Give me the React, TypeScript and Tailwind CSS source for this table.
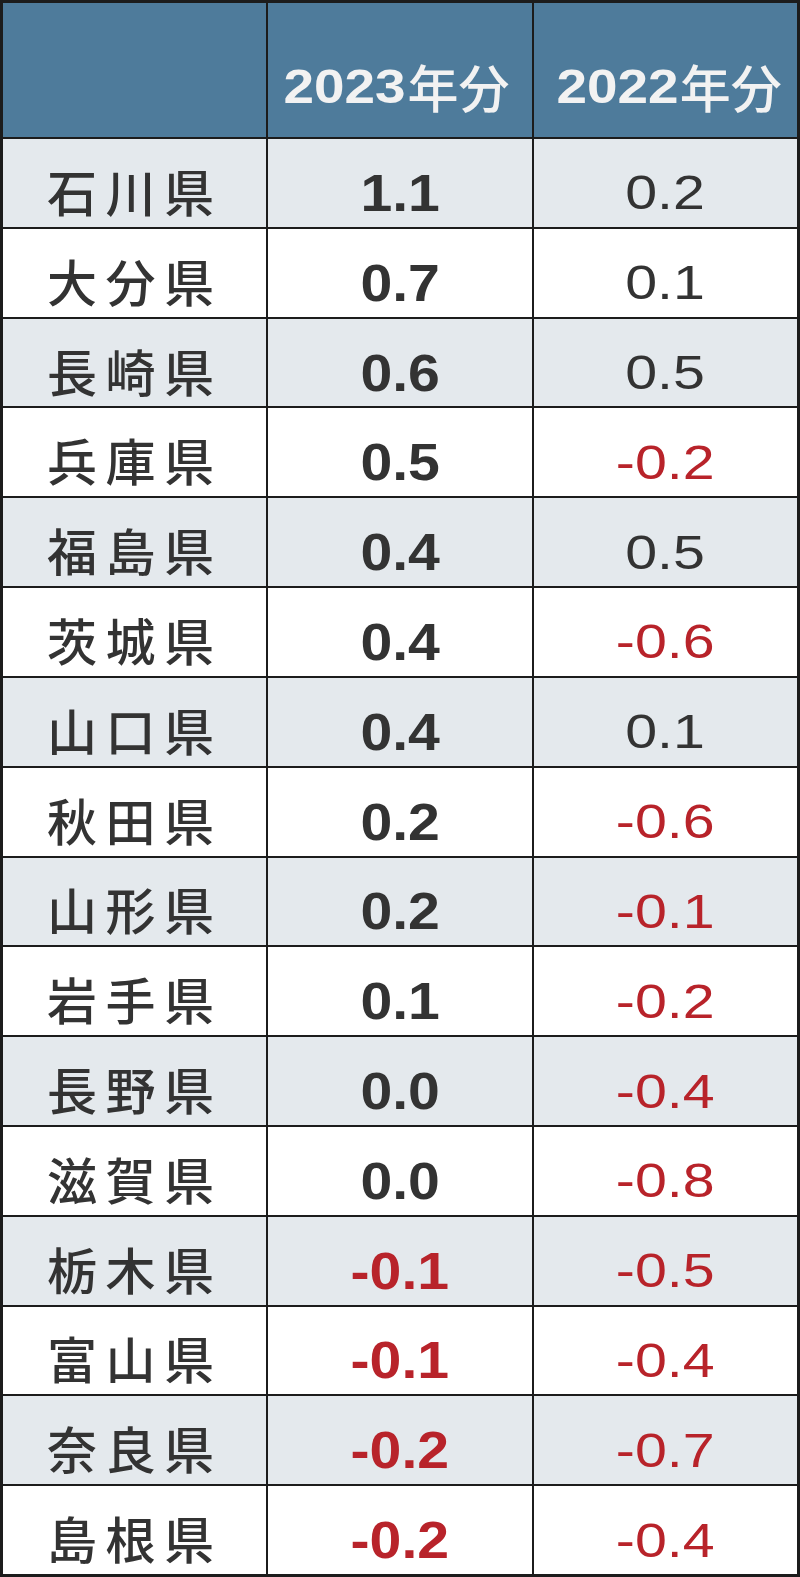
const rows: [string, string, string][] = [
  ["石川県", "1.1", "0.2"],
  ["大分県", "0.7", "0.1"],
  ["長崎県", "0.6", "0.5"],
  ["兵庫県", "0.5", "-0.2"],
  ["福島県", "0.4", "0.5"],
  ["茨城県", "0.4", "-0.6"],
  ["山口県", "0.4", "0.1"],
  ["秋田県", "0.2", "-0.6"],
  ["山形県", "0.2", "-0.1"],
  ["岩手県", "0.1", "-0.2"],
  ["長野県", "0.0", "-0.4"],
  ["滋賀県", "0.0", "-0.8"],
  ["栃木県", "-0.1", "-0.5"],
  ["富山県", "-0.1", "-0.4"],
  ["奈良県", "-0.2", "-0.7"],
  ["島根県", "-0.2", "-0.4"],
];

const jp = "font-['Noto_Sans_CJK_JP','Noto_Sans_CJK_SC',sans-serif]";
const num = "font-['Liberation_Sans','Noto_Sans_CJK_JP',sans-serif]";

function HeaderCell({ year, extra = "" }: { year: string; extra?: string }) {
  return (
    <div className={`bg-[#4e7b9b] flex items-center justify-center pt-[32px] text-[#f2f2f2] ${extra}`}>
      <span className={`${num} font-bold text-[49px] leading-none inline-block scale-x-[1.12] mr-[8px]`}>{year}</span>
      <span className={`${jp} font-medium text-[51px] leading-none`}>年分</span>
    </div>
  );
}

export default function App() {
  return (
    <div className="w-[800px] h-[1577px] grid grid-cols-3 grid-rows-[134px_repeat(16,minmax(0,1fr))] gap-[2px] bg-[#1c1c1c] border-[3px] border-[#1c1c1c]">
      <div className="bg-[#4e7b9b]" />
      <HeaderCell year="2023" />
      <HeaderCell year="2022" extra="pl-[14px]" />
      {rows.map(([name, a, b], i) => {
        const bg = i % 2 === 0 ? "bg-[#e4e9ed]" : "bg-white";
        const neg = (v: string) => v.startsWith("-");
        return [
          <div key={name + "n"} className={`${bg} flex items-center justify-center pt-[14px]`}>
            <span className={`${jp} font-medium text-[50px] leading-none tracking-[0.17em] text-[#333]`}>{name}</span>
          </div>,
          <div key={name + "a"} className={`${bg} flex items-center justify-center pt-[20px]`}>
            <span className={`${num} font-bold text-[52px] leading-none inline-block scale-x-[1.1] ${neg(a) ? "text-[#b8232a]" : "text-[#333]"}`}>{a}</span>
          </div>,
          <div key={name + "b"} className={`${bg} flex items-center justify-center pt-[20px]`}>
            <span className={`${num} text-[49px] leading-none inline-block scale-x-[1.17] ${neg(b) ? "text-[#b8232a]" : "text-[#333]"}`}>{b}</span>
          </div>,
        ];
      })}
    </div>
  );
}
